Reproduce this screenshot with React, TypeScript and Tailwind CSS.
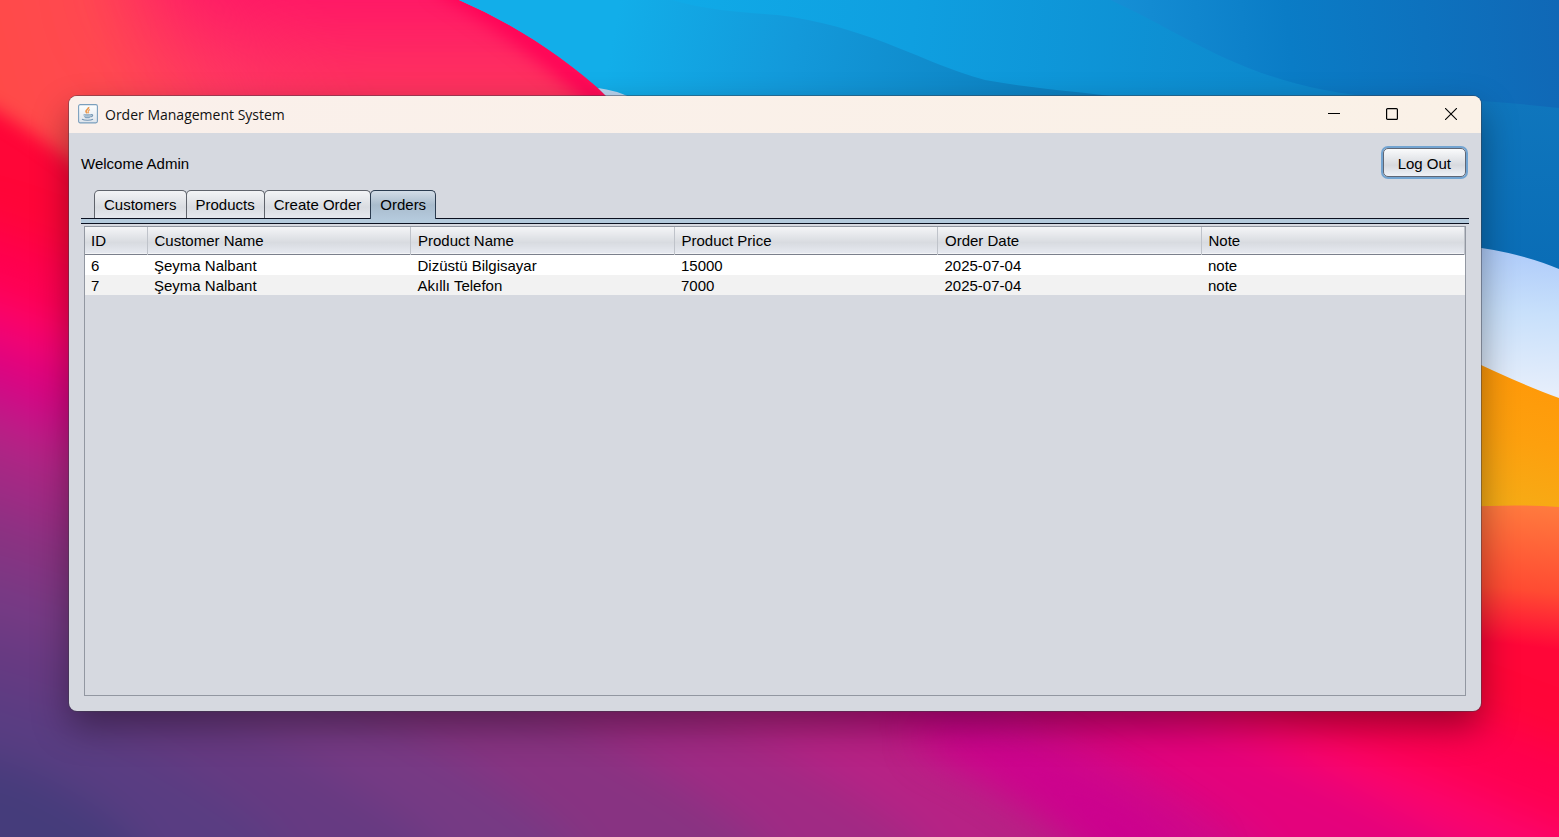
const columns = ['ID', 'Customer Name', 'Product Name', 'Product Price', 'Order Date', 'Note'];

const orders = [
  ['6', 'Şeyma Nalbant', 'Dizüstü Bilgisayar', '15000', '2025-07-04', 'note'],
  ['7', 'Şeyma Nalbant', 'Akıllı Telefon', '7000', '2025-07-04', 'note'],
];

const tabs = ['Customers', 'Products', 'Create Order', 'Orders'];

function Wallpaper() {
  return (
    <svg
      className="absolute inset-0 h-full w-full"
      viewBox="0 0 1559 837"
      preserveAspectRatio="none"
      aria-hidden="true"
    >
      <defs>
        <filter id="softest" colorInterpolationFilters="sRGB" filterUnits="userSpaceOnUse" x="-300" y="-300" width="2200" height="1500">
          <feGaussianBlur stdDeviation="45" />
        </filter>
        <filter id="soft" colorInterpolationFilters="sRGB" filterUnits="userSpaceOnUse" x="-300" y="-300" width="2200" height="1500">
          <feGaussianBlur stdDeviation="22" />
        </filter>
        <filter id="softer" colorInterpolationFilters="sRGB" filterUnits="userSpaceOnUse" x="-300" y="-300" width="2200" height="1500">
          <feGaussianBlur stdDeviation="9" />
        </filter>
        <linearGradient id="coral" gradientUnits="userSpaceOnUse" x1="0" y1="90" x2="330" y2="0">
          <stop offset="0" stopColor="#ff4a48" />
          <stop offset="0.3" stopColor="#ff4a50" />
          <stop offset="0.7" stopColor="#ff3864" />
          <stop offset="1" stopColor="#ff2068" />
        </linearGradient>
        <linearGradient id="coralDown" gradientUnits="userSpaceOnUse" x1="0" y1="0" x2="0" y2="110">
          <stop offset="0" stopColor="#ff1066" stopOpacity="0.9" />
          <stop offset="0.5" stopColor="#ff3064" stopOpacity="0.7" />
          <stop offset="1" stopColor="#fc4256" stopOpacity="0.8" />
        </linearGradient>
        <linearGradient id="sky" gradientUnits="userSpaceOnUse" x1="480" y1="0" x2="1559" y2="100">
          <stop offset="0" stopColor="#2bb4f0" />
          <stop offset="0.1" stopColor="#10aeea" />
          <stop offset="0.4" stopColor="#0f9fe0" />
          <stop offset="0.75" stopColor="#0d88cc" />
          <stop offset="1" stopColor="#0d6fb8" />
        </linearGradient>
        <linearGradient id="wave" gradientUnits="userSpaceOnUse" x1="620" y1="0" x2="1130" y2="100">
          <stop offset="0" stopColor="#12aee9" />
          <stop offset="0.35" stopColor="#1399da" />
          <stop offset="1" stopColor="#0b78b8" />
        </linearGradient>
        <linearGradient id="deep" gradientUnits="userSpaceOnUse" x1="1110" y1="60" x2="1559" y2="20">
          <stop offset="0" stopColor="#1690d6" />
          <stop offset="0.4" stopColor="#0a7cc6" />
          <stop offset="1" stopColor="#1068b6" />
        </linearGradient>
        <linearGradient id="deepDown" gradientUnits="userSpaceOnUse" x1="0" y1="100" x2="0" y2="265">
          <stop offset="0" stopColor="#0f76bd" />
          <stop offset="1" stopColor="#0a6db6" />
        </linearGradient>
        <linearGradient id="ice" gradientUnits="userSpaceOnUse" x1="1520" y1="248" x2="1510" y2="390">
          <stop offset="0" stopColor="#aecbfa" />
          <stop offset="0.45" stopColor="#c8e0fb" />
          <stop offset="1" stopColor="#e6eefb" />
        </linearGradient>
        <linearGradient id="amber" gradientUnits="userSpaceOnUse" x1="1540" y1="370" x2="1500" y2="510">
          <stop offset="0" stopColor="#ff9808" />
          <stop offset="0.5" stopColor="#fda00e" />
          <stop offset="1" stopColor="#f6ac16" />
        </linearGradient>
        <linearGradient id="ember" gradientUnits="userSpaceOnUse" x1="1530" y1="506" x2="1515" y2="645">
          <stop offset="0" stopColor="#ff7a3e" />
          <stop offset="0.6" stopColor="#ff4b32" />
          <stop offset="1" stopColor="#ff0638" />
        </linearGradient>
      </defs>

      <rect width="1559" height="837" fill="#ff0638" />
      <g filter="url(#soft)">
        <path d="M-200 180 L0 230 C500 420 1100 560 1700 800 V1200 H-200Z" fill="#ff0050" />
        <path d="M-200 240 L0 300 C500 480 1000 590 1559 830 L1800 930 V1200 H-200Z" fill="#fb056e" />
        <path d="M-200 270 L0 335 C450 500 1000 590 1450 840 L1800 1040 V1200 H-200Z" fill="#e4027c" />
        <path d="M-200 310 L0 372 C400 530 900 590 1250 840 L1500 1200 H-200Z" fill="#cf0a88" />
        <path d="M-200 350 L0 410 C400 570 800 640 1090 840 L1300 1200 H-200Z" fill="#b72285" />
        <path d="M-200 400 L0 455 C350 590 700 670 920 840 L1100 1200 H-200Z" fill="#a02a84" />
        <path d="M-200 460 L0 510 C300 620 560 680 760 840 L1000 1200 H-200Z" fill="#883382" />
        <path d="M-200 530 L0 570 C250 650 430 720 570 840 L800 1200 H-200Z" fill="#763a84" />
        <path d="M-200 590 L0 630 C200 690 320 760 430 840 L600 1200 H-200Z" fill="#663a82" />
        <path d="M-200 650 L0 690 C100 720 200 770 280 840 L400 1200 H-200Z" fill="#593d82" />
        <path d="M-200 720 L0 760 C60 780 100 805 135 840 L300 1200 H-200Z" fill="#453c7b" />
      </g>
      <path d="M930 710 Q1090 765 1210 860 L1110 870 Q1040 790 930 740Z" fill="#cc008f" filter="url(#soft)" />

      <path d="M-80 -80 H620 V260 H180 Q70 140 -80 70Z" fill="url(#coral)" filter="url(#softer)" />
      <path d="M190 -120 H680 V240 H330 Q270 100 130 -20Z" fill="url(#coralDown)" filter="url(#softest)" />
      <path d="M440 -20 Q540 40 612 110" fill="none" stroke="#ff0055" strokeWidth="22" filter="url(#softer)" />

      <path d="M459 0 H1559 V280 H720 L608 97 Q540 35 459 0Z" fill="url(#sky)" />
      <path
        d="M672 0 C720 14 760 12 792 17 C880 32 920 62 985 80 C1040 90 1090 92 1138 100 H700 L608 96 Q540 35 459 0Z"
        fill="url(#wave)"
      />
      <path d="M598 88 Q615 90 632 98 H608Z" fill="#b9d3ee" />
      <path d="M1106 -2 C1190 35 1250 90 1390 98 L1559 110 V-2Z" fill="url(#deep)" />
      <path d="M1380 97 Q1470 98 1559 108 V270 H1380Z" fill="url(#deepDown)" />
      <path d="M1460 245 Q1520 252 1559 269 V420 H1460Z" fill="url(#ice)" />
      <path d="M1460 355 Q1520 384 1559 398 V520 H1460Z" fill="url(#amber)" />
      <path d="M1460 507 Q1520 504 1559 507 V650 H1460Z" fill="url(#ember)" />
    </svg>
  );
}

function JavaIcon() {
  return (
    <svg className="h-5 w-5" viewBox="0 0 20 20" aria-hidden="true">
      <defs>
        <linearGradient id="tile" x1="0" y1="0" x2="0" y2="1">
          <stop offset="0" stopColor="#ffffff" />
          <stop offset="1" stopColor="#dde4ec" />
        </linearGradient>
      </defs>
      <rect x="0.6" y="0.6" width="18.8" height="18.3" rx="1.6" fill="url(#tile)" stroke="#7b9fbd" strokeWidth="1.1" />
      <path d="M10.6 3c.8 1.800-2.800 2.700-2.600 4.400.1 1 1 1.300 1.300 1.900" fill="none" stroke="#eb9a50" strokeWidth="1.700" />
      <path d="M12 5.600c-1.600.6-2.200 1.300-1.600 2.100.4.6.2 1.100-.4 1.600" fill="none" stroke="#f0a868" strokeWidth="1.200" />
      <path d="M5.500 10.300h7.800c-.1 2-.9 3.400-2 3.900H7.500c-1.100-.5-1.900-1.900-2-3.900Z" fill="#86a5bf" />
      <path d="M6 11.700c1.600.6 5 .6 6.700 0" fill="none" stroke="#dbe5ee" strokeWidth="0.800" />
      <path d="M13 10.800c2.300-.6 2.200 1.700-.4 2.200M4 15.200c2.600 1.400 8.500 1.400 11 0" fill="none" stroke="#7596b3" strokeWidth="1.200" />
    </svg>
  );
}

function TitleBar() {
  return (
    <header className="flex h-[37px] items-center justify-between bg-linear-to-r from-[#faf0eb] to-[#faf1e7] pb-px pl-[9px]">
      <div className="flex items-center gap-[7px]">
        <JavaIcon />
        <h1 className="pt-px font-['Open_Sans',sans-serif] text-sm text-[#111]">Order Management System</h1>
      </div>
      <div className="flex h-full">
        <button type="button" aria-label="Minimize" className="grid h-full w-[58px] place-items-center">
          <svg className="h-3 w-3" viewBox="0 0 12 12" fill="none" stroke="#000" aria-hidden="true">
            <path d="M0 5.500H12" />
          </svg>
        </button>
        <button type="button" aria-label="Maximize" className="grid h-full w-[58px] place-items-center">
          <svg className="h-3 w-3" viewBox="0 0 12 12" fill="none" stroke="#000" strokeWidth="1.200" aria-hidden="true">
            <rect x="0.600" y="0.600" width="10.800" height="10.800" rx="1" />
          </svg>
        </button>
        <button type="button" aria-label="Close" className="grid h-full w-[60px] place-items-center">
          <svg className="h-3 w-3" viewBox="0 0 12 12" fill="none" stroke="#000" strokeWidth="1.100" aria-hidden="true">
            <path d="M0 0L12 12M12 0L0 12" />
          </svg>
        </button>
      </div>
    </header>
  );
}

function TabBar() {
  return (
    <div role="tablist" className="flex border-b border-[#0b1020] pl-[13px]">
      {tabs.map((tab) => {
        const selected = tab === 'Orders';
        return (
          <button
            key={tab}
            type="button"
            role="tab"
            aria-selected={selected}
            className={
              selected
                ? '-mb-px h-[29px] rounded-t-[5px] border border-b-0 border-[#2b3c50] bg-linear-to-b from-[#d3dde7] via-[#a9bccd] via-50% to-[#b4c9dc] px-[9px] pb-px'
                : '-mr-px h-7 rounded-t-[5px] border border-b-0 border-[#5f636b] bg-linear-to-b from-[#f3f4f6] via-[#d9dce1] via-60% to-[#e6e8ee] px-[9px]'
            }
          >
            {tab}
          </button>
        );
      })}
    </div>
  );
}

function OrdersTable() {
  return (
    <table className="w-full table-fixed border-collapse text-left">
      <colgroup>
        <col className="w-[62px]" />
        <col />
        <col />
        <col />
        <col />
        <col />
      </colgroup>
      <thead>
        <tr className="h-[27px] border-b border-[#7b808c] bg-linear-to-b from-[#f4f5f7] via-[#d8dbe0] via-60% to-[#e6e9f0]">
          {columns.map((column) => (
            <th key={column} className="border-r border-[#bfc3ca] pt-0.5 pr-0 pb-0 pl-[7px] font-normal first:pl-1.5">
              {column}
            </th>
          ))}
        </tr>
      </thead>
      <tbody>
        {orders.map((order) => (
          <tr key={order[0]} className="h-5 bg-white leading-[18px] even:bg-[#f2f2f2]">
            {order.map((value, index) => (
              <td key={columns[index]} className="pt-0.5 pr-0 pb-0 pl-[7px] first:pl-1.5">
                {value}
              </td>
            ))}
          </tr>
        ))}
      </tbody>
    </table>
  );
}

export default function App() {
  return (
    <main className="relative flex min-h-screen flex-col overflow-hidden pt-24 pr-[78px] pb-[126px] pl-[69px] font-['Liberation_Sans',Arial,sans-serif] text-[15px] leading-5 text-black">
      <Wallpaper />
      <section className="relative flex flex-1 flex-col overflow-hidden rounded-lg bg-[#d6d9e0] shadow-[0_0_0_1px_rgba(60,60,70,0.45),0_16px_36px_rgba(0,0,0,0.38)]">
        <TitleBar />
        <div className="flex flex-1 flex-col px-3 pt-[15px] pb-3">
          <div className="flex items-center justify-between pr-[3px]">
            <p className="pt-0.5">Welcome Admin</p>
            <button
              type="button"
              className="h-[29px] rounded-[5px] border border-[#5f6776] bg-linear-to-b from-[#fafbfc] via-[#d7dadf] via-60% to-[#eff1f6] px-[14px] pt-0.5 shadow-[0_0_0_2px_#73a4d1]"
            >
              Log Out
            </button>
          </div>
          <div className="mt-[13px] flex flex-1 flex-col">
            <TabBar />
            <div className="h-1 bg-[#b4cadc]" />
            <div className="border-t border-[#0b1020]" />
            <div className="mx-[3px] mt-[2px] mb-[3px] flex-1 border border-[#9297a1]">
              <OrdersTable />
            </div>
          </div>
        </div>
      </section>
    </main>
  );
}
